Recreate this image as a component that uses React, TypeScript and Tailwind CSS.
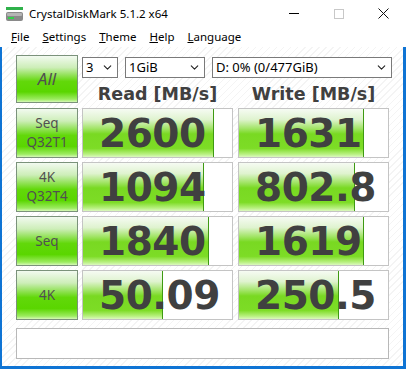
import { ChevronDown } from 'lucide-react';

type Row = { label: string[]; read: string; readFill: number; write: string; writeFill: number };

const rows: Row[] = [
  { label: ['Seq', 'Q32T1'], read: '2600', readFill: 131, write: '1631', writeFill: 125 },
  { label: ['4K', 'Q32T4'], read: '1094', readFill: 121, write: '802.8', writeFill: 116 },
  { label: ['Seq'], read: '1840', readFill: 126, write: '1619', writeFill: 125 },
  { label: ['4K'], read: '50.09', readFill: 80, write: '250.5', writeFill: 100 },
];

const ui = "font-['Noto_Sans','Liberation_Sans',sans-serif]";

function AppIcon() {
  return (
    <svg width="17" height="15" viewBox="0 0 17 15">
      <rect x="0" y="0" width="17" height="3" fill="#2fb14a" />
      <rect x="0" y="5" width="17" height="9" rx="2" fill="#8a8a8a" />
      <rect x="1" y="6" width="15" height="3" rx="1" fill="#b5b5b5" />
      <rect x="2" y="10" width="6" height="2" fill="#33d04a" />
    </svg>
  );
}

function Select({ w, text }: { w: string; text: string }) {
  return (
    <div className={`${w} flex h-[21px] items-center justify-between border border-[#7a7a7a] bg-white pl-[3px] pr-[3px] text-[13px] text-black ${ui}`}>
      <span className="leading-none">{text}</span>
      <ChevronDown size={13} strokeWidth={2} className="text-[#222]" />
    </div>
  );
}

function LabelButton({ children }: { children: React.ReactNode }) {
  return (
    <div
      className={`flex h-[50px] w-[62px] flex-col items-center justify-center border border-[#7b927b] bg-[linear-gradient(to_bottom,#f2faf0_0%,#cdeeb8_25%,#62d80a_55%,#5ad600_78%,#9cec60_94%,#d6f8b8_100%)] text-[#505050] ${ui}`}
    >
      {children}
    </div>
  );
}

function ValueBox({ value, fill }: { value: string; fill: number }) {
  return (
    <div className="relative h-[50px] w-[151px] border border-[#c4c4c4] bg-white">
      <div
        className="h-full border-r border-[#3e9a12] bg-[linear-gradient(to_bottom,#f6fbf3_0%,#dff3cf_22%,#a4e56a_40%,#79d922_52%,#7ddc26_82%,#b8f080_94%,#dcf8c0_100%)]"
        style={{ width: fill }}
      />
      <span className="absolute inset-y-0 left-[16px] flex items-center font-['DejaVu_Sans',sans-serif] text-[39px] leading-none font-bold tracking-[-0.5px] text-[#404040]">
        {value}
      </span>
    </div>
  );
}

export default function App() {
  return (
    <div className="flex h-[369px] w-[406px] flex-col overflow-hidden bg-white">
      {/* title bar */}
      <div className={`flex h-[27px] shrink-0 items-center ${ui}`}>
        <div className="ml-[6px] mt-[1px]">
          <AppIcon />
        </div>
        <span className="ml-[6px] text-[11.5px] text-black">CrystalDiskMark 5.1.2 x64</span>
        <div className="ml-auto flex h-full items-center">
          <div className="flex w-[45px] justify-center">
            <div className="h-px w-[10px] bg-black" />
          </div>
          <div className="flex w-[45px] justify-center">
            <div className="h-[10px] w-[10px] border border-[#c8c8c8]" />
          </div>
          <div className="flex w-[45px] justify-center">
            <svg width="11" height="11" viewBox="0 0 11 11">
              <path d="M0.5 0.5 L10.5 10.5 M10.5 0.5 L0.5 10.5" stroke="#111" strokeWidth="1" />
            </svg>
          </div>
        </div>
      </div>

      {/* menu bar */}
      <div className={`flex h-[20px] shrink-0 items-center gap-[13px] pl-[11px] text-[11.5px] text-black ${ui}`}>
        <span><u>F</u>ile</span>
        <span><u>S</u>ettings</span>
        <span><u>T</u>heme</span>
        <span><u>H</u>elp</span>
        <span><u>L</u>anguage</span>
      </div>

      {/* client */}
      <div className="flex flex-1 flex-col border-b-[3px] border-l-2 border-r-[3px] border-[#0f74d4] bg-[repeating-linear-gradient(135deg,#ffffff_0px,#ffffff_4px,#f4f4f4_4px,#f4f4f4_5px)] pl-[14px] pt-[8px]">
        <div className="flex h-[48px]">
          <div
            className={`flex h-[48px] w-[62px] items-center justify-center border border-[#7b927b] bg-[linear-gradient(to_bottom,#f2faf0_0%,#cdeeb8_25%,#62d80a_55%,#5ad600_78%,#9cec60_94%,#d6f8b8_100%)] text-[17px] italic text-[#505050] ${ui}`}
          >
            All
          </div>
          <div className="ml-[4px] flex flex-col">
            <div className="mt-[2px] flex gap-[7px]">
              <Select w="w-[36px]" text="3" />
              <Select w="w-[80px]" text="1GiB" />
              <Select w="w-[180px]" text="D: 0% (0/477GiB)" />
            </div>
            <div className="mt-[5px] flex h-[22px] items-center font-['DejaVu_Sans',sans-serif] text-[17.5px] font-bold text-[#404040]">
              <span className="w-[151px] text-center">Read [MB/s]</span>
              <span className="ml-[5px] w-[151px] text-center">Write [MB/s]</span>
            </div>
          </div>
        </div>

        <div className="mt-[5px] flex flex-col gap-[4px]">
          {rows.map((r, i) => (
            <div key={i} className="flex">
              <LabelButton>
                {r.label.map((l) => (
                  <span key={l} className="text-[13.5px] leading-[19px]">
                    {l}
                  </span>
                ))}
              </LabelButton>
              <div className="ml-[4px]">
                <ValueBox value={r.read} fill={r.readFill} />
              </div>
              <div className="ml-[5px]">
                <ValueBox value={r.write} fill={r.writeFill} />
              </div>
            </div>
          ))}
        </div>

        <div className="mt-[8px] h-[31px] w-[373px] border border-[#b8b8b8] bg-white" />
      </div>
    </div>
  );
}
